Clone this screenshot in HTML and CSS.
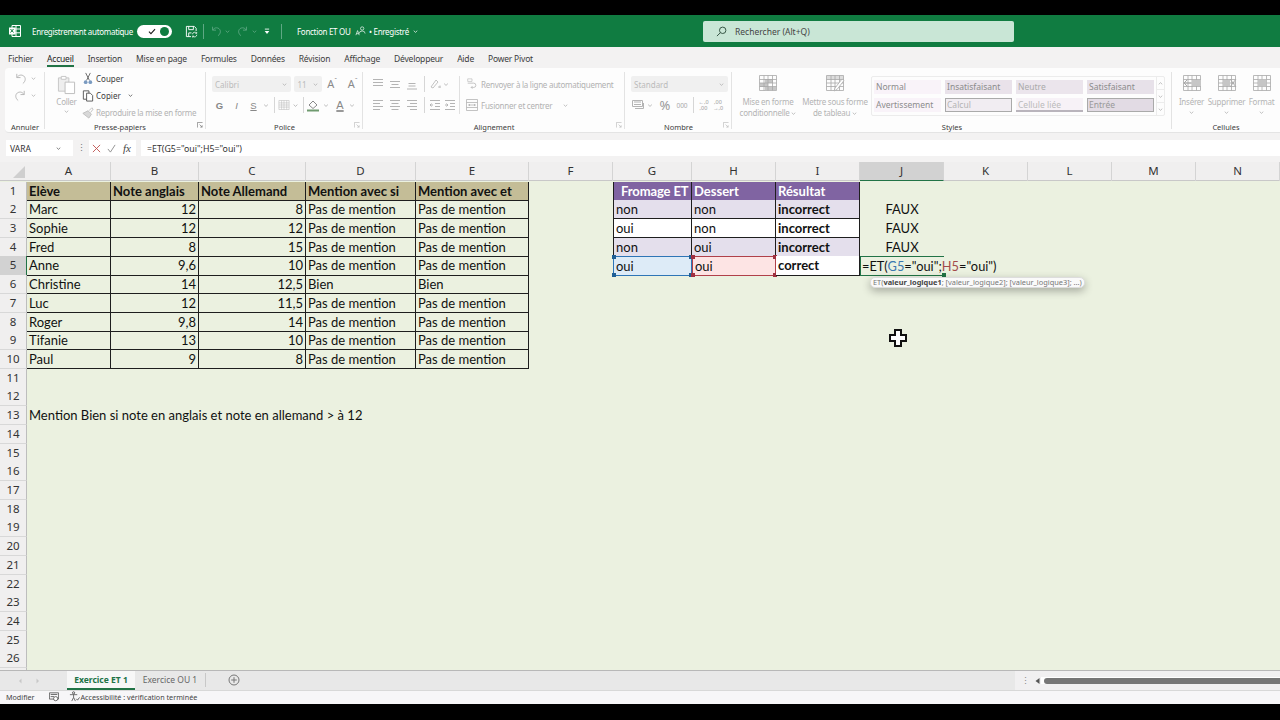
FILE: index.html
```html
<!DOCTYPE html>
<html lang="fr">
<head>
<meta charset="utf-8">
<title>Fonction ET OU - Excel</title>
<link rel="stylesheet" href="styles.css">
</head>
<body>
<svg class="sprite" aria-hidden="true">
  <symbol id="chev" viewBox="0 0 7 4"><path d="M1 .8 3.5 3.2 6 .8" fill="none" stroke="currentColor"/></symbol>
  <symbol id="undo" viewBox="0 0 14 14"><path d="M3 2v4h4M3.2 6C5 3 8 2.600 10.500 4.300 13 6.500 12.500 10 9.500 12.500" fill="none" stroke="currentColor" stroke-width="1"/></symbol>
  <symbol id="redo" viewBox="0 0 14 14"><path d="M11 2v4H7M10.800 6C9 3 6 2.600 3.500 4.300 1 6.500 1.500 10 4.500 12.500" fill="none" stroke="currentColor" stroke-width="1"/></symbol>
  <symbol id="al-top" viewBox="0 0 12 12"><path d="M1 1.500h10M1 4.500h10M1 7.500h10" stroke="currentColor"/></symbol>
  <symbol id="al-mid" viewBox="0 0 12 12"><path d="M1 3.500h10M2.500 6.500h7M1 9.500h10" stroke="currentColor"/></symbol>
  <symbol id="al-bot" viewBox="0 0 12 12"><path d="M2.500 5.500h7M2.500 8h7M1 11h10" stroke="currentColor"/></symbol>
  <symbol id="tx-l" viewBox="0 0 12 12"><path d="M1 1.500h10M1 4.500h7M1 7.500h10M1 10.500h7" stroke="currentColor"/></symbol>
  <symbol id="tx-c" viewBox="0 0 12 12"><path d="M1 1.500h10M2.500 4.500h7M1 7.500h10M2.500 10.500h7" stroke="currentColor"/></symbol>
  <symbol id="tx-r" viewBox="0 0 12 12"><path d="M1 1.500h10M4 4.500h7M1 7.500h10M4 10.500h7" stroke="currentColor"/></symbol>
  <symbol id="ind-l" viewBox="0 0 12 12"><path d="M1 1.500h10M6 4.500h5M6 7.500h5M1 10.500h10M4 6H1M2.500 4.500 1 6l1.500 1.500" fill="none" stroke="currentColor"/></symbol>
  <symbol id="ind-r" viewBox="0 0 12 12"><path d="M1 1.500h10M6 4.500h5M6 7.500h5M1 10.500h10M1 6h3M2.500 4.500 4 6 2.500 7.500" fill="none" stroke="currentColor"/></symbol>
  <symbol id="tbl" viewBox="0 0 20 18"><path d="M1.500 1.500h17v15h-17zM1.500 5.500h17M1.500 9h17M1.500 12.500h17M6 1.500v15M10 1.500v15M14.500 1.500v15" fill="none" stroke="currentColor" stroke-width=".8"/></symbol>
</svg>

<div class="app">
  <header class="titlebar">
    <svg class="ti-xl" viewBox="0 0 14 14"><path d="M4 1.500h8.500v11H4zM8 1.500v11M4 5h8.500M4 8.800h8.500" fill="none" stroke="#fff" stroke-width="1"/><path d="M1 3.500h6.500v7H1z" fill="#fff"/><path d="M2.500 5l3 3.500M5.500 5l-3 3.500" stroke="#107c41"/></svg>
    <span class="ti-auto">Enregistrement automatique</span>
    <span class="toggle"><svg viewBox="0 0 9 8"><path d="M1 4.200 3.300 6.500 8 1.300" fill="none" stroke="#1a1a1a" stroke-width="1.200"/></svg><i></i></span>
    <svg class="ti-save" viewBox="0 0 14 14"><path d="M1.500 1.500h8.500l2 2v3M1.500 1.500v11h5M4 1.500v3.500h5V1.500M4 12.500V8.500h3" fill="none" stroke="#fff"/><path d="M8 10a2.500 2.500 0 0 1 4.500-1.200M12.700 10.500A2.500 2.500 0 0 1 8.300 12M12.600 7.500v1.500h-1.500M8.200 13.500V12h1.500" fill="none" stroke="#fff" stroke-width=".8"/></svg>
    <span class="ti-sep"></span>
    <svg class="ti-undo"><use href="#undo"/></svg><svg class="ti-ch"><use href="#chev"/></svg>
    <svg class="ti-undo"><use href="#redo"/></svg><svg class="ti-ch"><use href="#chev"/></svg>
    <svg class="ti-qat" viewBox="0 0 7 8"><path d="M1 1.200h5" stroke="#fff"/><path d="M.8 3.500h5.400L3.500 7z" fill="#fff"/></svg>
    <span class="ti-sep ti-sep2"></span>
    <span class="ti-doc">Fonction ET OU</span>
    <svg class="ti-person" viewBox="0 0 13 12"><circle cx="8.500" cy="3" r="2" fill="none" stroke="#fff" stroke-width=".8"/><path d="M5 9a3.500 3 0 0 1 7 0" fill="none" stroke="#fff" stroke-width=".8"/><path d="M1 11 3 5.500 5 11M1.800 9.200h2.400" fill="none" stroke="#fff" stroke-width=".8"/></svg>
    <span class="ti-state">• Enregistré</span>
    <svg class="ti-ch ti-ch2"><use href="#chev"/></svg>
    <div class="search">
      <svg viewBox="0 0 12 12"><circle cx="7.300" cy="4.700" r="3.500" fill="none" stroke="#2c4a3a"/><path d="M4.800 7.300 1 11" stroke="#2c4a3a"/></svg>
      <span>Rechercher (Alt+Q)</span>
    </div>
  </header>

  <nav class="tabs">
    <span>Fichier</span><span class="on">Accueil</span><span>Insertion</span><span>Mise en page</span><span>Formules</span><span>Données</span><span>Révision</span><span>Affichage</span><span>Développeur</span><span>Aide</span><span>Power Pivot</span>
  </nav>

  <div class="chrome">
    <section class="ribbon">
      <div class="group g-undo">
        <div class="g-body stack">
          <div class="line"><svg class="i13 dis"><use href="#undo"/></svg><svg class="chv"><use href="#chev"/></svg></div>
          <div class="line"><svg class="i13 dis"><use href="#redo"/></svg><svg class="chv"><use href="#chev"/></svg></div>
        </div>
        <div class="g-label">Annuler</div>
      </div>

      <div class="group g-clip">
        <div class="g-body row-body">
          <div class="paste">
            <svg class="paste-ic" viewBox="0 0 20 21"><path d="M1.500 3h11v14h-11z" fill="#eee" stroke="#c6c6c6"/><path d="M4.500 1.500h5v3h-5z" fill="#fff" stroke="#c6c6c6"/><path d="M8.500 7.500h10v12h-10z" fill="#fff" stroke="#bdbdbd"/></svg>
            <span class="dtxt">Coller</span>
            <svg class="chv"><use href="#chev"/></svg>
          </div>
          <div class="clip-tools">
            <div class="tool"><svg viewBox="0 0 12 14"><path d="M3.500 1 7.500 9M8.500 1 4.500 9" stroke="#666" fill="none"/><circle cx="3.500" cy="11" r="2" fill="#7a9ac0"/><circle cx="8.500" cy="11" r="2" fill="#7a9ac0"/></svg><span class="etxt">Couper</span></div>
            <div class="tool"><svg viewBox="0 0 12 14"><path d="M1 2h6v9H1z" fill="none" stroke="#555"/><path d="M4.500 4.500h4l2.500 2.500v6H4.500z" fill="#fff" stroke="#555"/></svg><span class="etxt">Copier</span><svg class="chv chv-d"><use href="#chev"/></svg></div>
            <div class="tool"><svg viewBox="0 0 14 14"><path d="M1 8 7 5l4 4-3 4.500z" fill="#d8d8d8" stroke="#bbb"/><path d="M8 5l3.500-3.500 1.500 1.500L10 7" fill="none" stroke="#bbb"/></svg><span class="dtxt">Reproduire la mise en forme</span></div>
          </div>
        </div>
        <div class="g-label lbl-clip">Presse-papiers</div>
        <svg class="launch" viewBox="0 0 7 7"><path d="M.5 6.500v-6h6M3 3l3 3M3.800 6H6V3.800" fill="none" stroke="#777" stroke-width=".8"/></svg>
      </div>

      <div class="group g-font">
        <div class="g-body pad-rows">
          <div class="rline">
            <div class="combo c-font"><span>Calibri</span><svg class="chv"><use href="#chev"/></svg></div>
            <div class="combo c-size"><span>11</span><svg class="chv"><use href="#chev"/></svg></div>
            <span class="aa aa-up">A<sup>ˆ</sup></span><span class="aa">A<sup>ˇ</sup></span>
          </div>
          <div class="rline r2">
            <b class="fmt w17">G</b><i class="fmt w17">I</i><u class="fmt w17">S</u>
            <svg class="chv w8"><use href="#chev"/></svg><span class="vsep w8"></span>
            <svg class="i12 dis bord"><use href="#tbl"/></svg>
            <svg class="chv w11"><use href="#chev"/></svg><span class="vsep w4"></span>
            <span class="bucket w16"><svg viewBox="0 0 12 13"><path d="M2 6 6 2l4 4-4 3.500z" fill="none" stroke="#888"/><path d="M0 11.500h12" stroke="#6f9a6f" stroke-width="2"/></svg></span>
            <svg class="chv w10"><use href="#chev"/></svg>
            <span class="fmt fa w18">A</span>
            <svg class="chv w6"><use href="#chev"/></svg>
          </div>
        </div>
        <div class="g-label">Police</div>
        <svg class="launch" viewBox="0 0 7 7"><path d="M.5 6.500v-6h6M3 3l3 3M3.800 6H6V3.800" fill="none" stroke="#bbb" stroke-width=".8"/></svg>
      </div>

      <div class="group g-align">
        <div class="g-body row-body">
          <div class="al-left">
            <div class="rline">
              <span class="w17 c-i"><svg class="i12 dis"><use href="#al-top"/></svg></span>
              <span class="w17 c-i"><svg class="i12 dis"><use href="#al-mid"/></svg></span>
              <span class="w17 c-i"><svg class="i12 dis"><use href="#al-bot"/></svg></span>
              <span class="vsep w8"></span>
              <span class="w13 c-i"><svg class="i12 dis" viewBox="0 0 12 12"><path d="M2 9 7 2l2 2-5 6zM9 9h2.500M11 7.500v2.500" fill="none" stroke="currentColor" stroke-width=".8"/></svg></span>
              <svg class="chv w10"><use href="#chev"/></svg>
            </div>
            <div class="rline r2">
              <span class="w17 c-i"><svg class="i12 dis"><use href="#tx-l"/></svg></span>
              <span class="w17 c-i"><svg class="i12 dis"><use href="#tx-c"/></svg></span>
              <span class="w17 c-i"><svg class="i12 dis"><use href="#tx-r"/></svg></span>
              <span class="vsep w8"></span>
              <span class="w13 c-i"><svg class="i12 dis"><use href="#ind-l"/></svg></span>
              <span class="w17 c-i"><svg class="i12 dis"><use href="#ind-r"/></svg></span>
            </div>
          </div>
          <div class="al-right">
            <div class="rline al-tool"><svg class="i12 dis" viewBox="0 0 12 14"><path d="M1 6h7a2.500 2.500 0 0 1 0 5H5M6.500 9.500 5 11l1.500 1.500" fill="none" stroke="currentColor" stroke-width=".9"/><path d="M1 1h5v3H1z" fill="none" stroke="currentColor" stroke-width=".7"/></svg><span class="dtxt">Renvoyer à la ligne automatiquement</span></div>
            <div class="rline al-tool r2"><svg class="i12 dis" viewBox="0 0 12 12"><path d="M.5.500h11v11H.5zM.5 3.500h11M.5 8.500h11M3.500 6h5M2.500 6l1-1v2zM9.500 6l-1-1v2z" fill="none" stroke="currentColor" stroke-width=".8"/></svg><span class="dtxt">Fusionner et centrer</span><svg class="chv chv-m"><use href="#chev"/></svg></div>
          </div>
        </div>
        <div class="g-label">Alignement</div>
        <svg class="launch" viewBox="0 0 7 7"><path d="M.5 6.500v-6h6M3 3l3 3M3.800 6H6V3.800" fill="none" stroke="#bbb" stroke-width=".8"/></svg>
      </div>

      <div class="group g-num">
        <div class="g-body pad-rows">
          <div class="rline"><div class="combo c-std"><span>Standard</span><svg class="chv"><use href="#chev"/></svg></div></div>
          <div class="rline r2">
            <span class="w14 c-i"><svg class="i12 dis" viewBox="0 0 12 12"><path d="M.5 1.500h10v6H.5zM3 9.500h8.500V4" fill="none" stroke="currentColor"/><path d="M2 3h7M2 5.500h7" stroke="currentColor"/></svg></span>
            <svg class="chv w10"><use href="#chev"/></svg>
            <span class="pct w20">%</span><span class="mil w14">000</span><span class="vsep w8"></span>
            <span class="dec w13">←,0<br>,00</span><span class="dec w16">,00<br>→,0</span>
          </div>
        </div>
        <div class="g-label">Nombre</div>
        <svg class="launch" viewBox="0 0 7 7"><path d="M.5 6.500v-6h6M3 3l3 3M3.800 6H6V3.800" fill="none" stroke="#bbb" stroke-width=".8"/></svg>
      </div>

      <div class="group g-styles">
        <div class="g-body row-body">
          <div class="big b1">
            <svg class="i-big" viewBox="0 0 20 18"><path d="M7 5h8v4H7zM2 9h8v4H2zM7 13h11v3H7z" fill="#c6c6c6"/><use href="#tbl"/></svg>
            <span>Mise en forme</span><span>conditionnelle <svg class="chv in"><use href="#chev"/></svg></span>
          </div>
          <div class="big b2">
            <svg class="i-big" viewBox="0 0 20 18"><path d="M1.500 1.500h17v4h-17z" fill="#ddd"/><use href="#tbl"/><path d="M9 17l1-3 7-9 2 1.500-7 9z" fill="#fff" stroke="#aaa" stroke-width=".8"/></svg>
            <span>Mettre sous forme</span><span>de tableau <svg class="chv in"><use href="#chev"/></svg></span>
          </div>
          <div class="gallery">
            <div class="gal-grid">
              <span class="st">Normal</span><span class="st st-bad">Insatisfaisant</span><span class="st st-neu">Neutre</span><span class="st st-good">Satisfaisant</span>
              <span class="st">Avertissement</span><span class="st st-calc">Calcul</span><span class="st st-link">Cellule liée</span><span class="st st-in">Entrée</span>
            </div>
            <div class="gal-scroll">
              <span><svg class="chv up"><use href="#chev"/></svg></span>
              <span><svg class="chv"><use href="#chev"/></svg></span>
              <span><svg class="chv"><use href="#chev"/></svg></span>
            </div>
          </div>
        </div>
        <div class="g-label">Styles</div>
      </div>

      <div class="group g-cells">
        <div class="g-body row-body">
          <div class="big cellbtn">
            <svg class="i-big" viewBox="0 0 20 18"><use href="#tbl"/><path d="M10 6h9v6h-9z" fill="#c6c6c6"/><path d="M9 9H2M5 6 2 9l3 3" fill="none" stroke="#aaa"/></svg>
            <span>Insérer</span><svg class="chv"><use href="#chev"/></svg>
          </div>
          <div class="big cellbtn">
            <svg class="i-big" viewBox="0 0 20 18"><use href="#tbl"/><path d="M6 6h7v6H6z" fill="#c6c6c6"/><path d="M13 5l6 8M19 5l-6 8" stroke="#aaa"/></svg>
            <span>Supprimer</span><svg class="chv"><use href="#chev"/></svg>
          </div>
          <div class="big cellbtn">
            <svg class="i-big" viewBox="0 0 20 18"><use href="#tbl"/><path d="M6 5.500h8.500v7H6z" fill="#c6c6c6"/></svg>
            <span>Format</span><svg class="chv"><use href="#chev"/></svg>
          </div>
        </div>
        <div class="g-label">Cellules</div>
      </div>
    </section>

    <div class="fbar">
      <div class="namebox"><span>VARA</span><svg class="chv"><use href="#chev"/></svg></div>
      <span class="dots">⋮</span>
      <div class="fx">
        <svg viewBox="0 0 10 10"><path d="M1 1l8 8M9 1 1 9" stroke="#c0504d"/></svg>
        <svg viewBox="0 0 10 10"><path d="M1 5.500 3.800 9 9 1" fill="none" stroke="#8a8a8a"/></svg>
        <em>fx</em>
      </div>
      <div class="finput">=ET(G5="oui";H5="oui")</div>
    </div>
  </div>

  <div class="cols">
    <div class="corner"><i></i></div>
    <span>A</span><span>B</span><span>C</span><span>D</span><span>E</span><span>F</span><span>G</span><span>H</span><span>I</span><span class="sel">J</span><span>K</span><span>L</span><span>M</span><span>N</span>
  </div>

  <main class="sheet">
    <div class="row"><b class="rh">1</b><div class="c b first h">Elève</div><div class="c b h">Note anglais</div><div class="c b h">Note Allemand</div><div class="c b h">Mention avec si</div><div class="c b h">Mention avec et</div><div></div><div class="c b first p indent">Fromage ET</div><div class="c b p">Dessert</div><div class="c b p">Résultat</div></div>
    <div class="row"><b class="rh">2</b><div class="c b first">Marc</div><div class="c b n">12</div><div class="c b n">8</div><div class="c b">Pas de mention</div><div class="c b">Pas de mention</div><div></div><div class="c b first l">non</div><div class="c b l">non</div><div class="c b l st-b">incorrect</div><div class="c m">FAUX</div></div>
    <div class="row"><b class="rh">3</b><div class="c b first">Sophie</div><div class="c b n">12</div><div class="c b n">12</div><div class="c b">Pas de mention</div><div class="c b">Pas de mention</div><div></div><div class="c b first wh">oui</div><div class="c b wh">non</div><div class="c b wh st-b">incorrect</div><div class="c m">FAUX</div></div>
    <div class="row"><b class="rh">4</b><div class="c b first">Fred</div><div class="c b n">8</div><div class="c b n">15</div><div class="c b">Pas de mention</div><div class="c b">Pas de mention</div><div></div><div class="c b first l">non</div><div class="c b l">oui</div><div class="c b l st-b">incorrect</div><div class="c m">FAUX</div></div>
    <div class="row"><b class="rh rsel">5</b><div class="c b first">Anne</div><div class="c b n">9,6</div><div class="c b n">10</div><div class="c b">Pas de mention</div><div class="c b">Pas de mention</div><div></div>
      <div class="c ref rb">oui<i class="hd tl"></i><i class="hd tr"></i><i class="hd bl"></i><i class="hd br"></i></div>
      <div class="c ref rr">oui<i class="hd tl"></i><i class="hd tr"></i><i class="hd bl"></i><i class="hd br"></i></div>
      <div class="c b wh st-b">correct</div>
      <div class="c edit">=ET(<span class="fb">G5</span>="oui";<span class="fr">H5</span>="oui")<i class="hd br"></i></div></div>
    <div class="row"><b class="rh">6</b><div class="c b first">Christine</div><div class="c b n">14</div><div class="c b n">12,5</div><div class="c b">Bien</div><div class="c b">Bien</div></div>
    <div class="row"><b class="rh">7</b><div class="c b first">Luc</div><div class="c b n">12</div><div class="c b n">11,5</div><div class="c b">Pas de mention</div><div class="c b">Pas de mention</div></div>
    <div class="row"><b class="rh">8</b><div class="c b first">Roger</div><div class="c b n">9,8</div><div class="c b n">14</div><div class="c b">Pas de mention</div><div class="c b">Pas de mention</div></div>
    <div class="row"><b class="rh">9</b><div class="c b first">Tifanie</div><div class="c b n">13</div><div class="c b n">10</div><div class="c b">Pas de mention</div><div class="c b">Pas de mention</div></div>
    <div class="row"><b class="rh">10</b><div class="c b first">Paul</div><div class="c b n">9</div><div class="c b n">8</div><div class="c b">Pas de mention</div><div class="c b">Pas de mention</div></div>
    <div class="row"><b class="rh">11</b></div>
    <div class="row"><b class="rh">12</b></div>
    <div class="row"><b class="rh">13</b><div class="c">Mention Bien si note en anglais et note en allemand &gt; à 12</div></div>
    <div class="row"><b class="rh">14</b></div>
    <div class="row"><b class="rh">15</b></div>
    <div class="row"><b class="rh">16</b></div>
    <div class="row"><b class="rh">17</b></div>
    <div class="row"><b class="rh">18</b></div>
    <div class="row"><b class="rh">19</b></div>
    <div class="row"><b class="rh">20</b></div>
    <div class="row"><b class="rh">21</b></div>
    <div class="row"><b class="rh">22</b></div>
    <div class="row"><b class="rh">23</b></div>
    <div class="row"><b class="rh">24</b></div>
    <div class="row"><b class="rh">25</b></div>
    <div class="row"><b class="rh">26</b></div>
    <div class="row"><b class="rh"></b></div>

    <div class="tip">ET(<b>valeur_logique1</b>; [valeur_logique2]; [valeur_logique3]; ...)</div>
    <svg class="cursor" viewBox="0 0 22 22"><path d="M8 3h6v5h5v6h-5v5H8v-5H3V8h5z" fill="#fff" stroke="#111" stroke-width="2"/></svg>
  </main>

  <div class="sheetbar">
    <div class="nav"><svg viewBox="0 0 4 6"><path d="M3.500.5 1 3l2.500 2.500z" fill="#c8c8c8"/></svg><svg viewBox="0 0 4 6"><path d="M.5.5 3 3 .5 5.500z" fill="#c8c8c8"/></svg></div>
    <div class="sh on">Exercice ET 1</div>
    <div class="sh">Exercice OU 1</div>
    <svg class="addsh" viewBox="0 0 12 12"><circle cx="6" cy="6" r="5" fill="none" stroke="#777"/><path d="M6 3.200v5.600M3.200 6h5.600" stroke="#777"/></svg>
    <div class="hscroll">
      <span class="grip">⋮</span>
      <svg class="harrow" viewBox="0 0 5 6"><path d="M4.500 0 .5 3l4 3z" fill="#555"/></svg>
      <div class="track"><i></i></div>
    </div>
  </div>

  <footer class="status">
    <span>Modifier</span>
    <svg class="st-macro" viewBox="0 0 12 12"><path d="M.5 1h11v7.500H.5z" fill="none" stroke="#555"/><path d="M2 3h8M2 5.500h4" stroke="#555"/><circle cx="8" cy="8" r="2.500" fill="#fff" stroke="#555"/></svg>
    <svg class="st-acc" viewBox="0 0 12 12"><circle cx="5" cy="2" r="1.200" fill="none" stroke="#555"/><path d="M1 4h8M5 4v3L3 11M5 7l2 4" fill="none" stroke="#555" stroke-width=".9"/><path d="M8 8.500 9.300 10 11.500 7" fill="none" stroke="#555"/></svg>
    <span>Accessibilité : vérification terminée</span>
  </footer>
</div>
</body>
</html>
```

FILE: styles.css
```css
* { box-sizing: border-box; }
html, body { margin: 0; height: 100%; }
body { background: #000; padding: 15px 0 16px; overflow: hidden; font-family: "Noto Sans", "Open Sans", sans-serif; color: #333; }
.sprite { display: none; }
.app { height: 689px; display: flex; flex-direction: column; overflow: hidden; background: #f3f2f2; }
svg { display: block; flex: none; }

/* Title bar */
.titlebar { height: 32px; flex: none; background: #107c41; color: #fff; display: flex; align-items: center; font-size: 8px; letter-spacing: -.3px; padding-left: 8px; }
.ti-xl { width: 14px; height: 14px; }
.ti-auto { margin-left: 10px; width: 105px; white-space: nowrap; }
.toggle { width: 35px; height: 13px; border-radius: 7px; background: #fff; display: flex; align-items: center; justify-content: flex-end; gap: 4px; padding-right: 3px; }
.toggle svg { width: 8px; height: 7px; }
.toggle i { width: 9px; height: 9px; border-radius: 50%; background: #107c41; }
.ti-save { width: 13px; height: 13px; margin-left: 13px; }
.ti-sep { width: 1px; height: 15px; background: #5fa884; margin: 0 6px 0 5px; }
.ti-undo { width: 12px; height: 12px; color: #5fa884; }
.ti-ch { width: 5px; height: 3px; margin: 0 7px 0 3px; color: #6fb08f; }
.ti-qat { width: 6px; height: 7px; margin-left: 0; }
.ti-sep2 { margin: 0 15px 0 11px; }
.ti-doc { width: 57px; white-space: nowrap; }
.ti-person { width: 11px; height: 10px; margin-left: 1px; }
.ti-state { padding-left: 3px; width: 47px; white-space: nowrap; }
.ti-ch2 { margin: 0; color: #fff; }
.search { position: absolute; left: 703px; top: 21px; width: 311px; height: 21px; background: #c9e6d6; border-radius: 2px; display: flex; align-items: center; padding-left: 13px; color: #444; gap: 8px; font-size: 8.5px; letter-spacing: 0; }
.search svg { width: 11px; height: 11px; }

/* Tabs */
.tabs { height: 21px; flex: none; display: flex; gap: 14px; padding-left: 8px; font-size: 8.5px; letter-spacing: -.2px; align-items: center; color: #3c3c3c; }
.tabs span { white-space: nowrap; line-height: 19px; height: 18px; }
.tabs .on { border-bottom: 2px solid #217346; color: #222; }

/* Ribbon */
.chrome { height: 94px; flex: none; padding-left: 5px; }
.ribbon { height: 65px; background: #fdfdfd; border-radius: 4px 0 0 4px; display: flex; border-bottom: 1px solid #e4e4e4; }
.group { position: relative; display: flex; flex-direction: column; flex: none; }
.group::after { content: ""; position: absolute; right: 0; top: 4px; bottom: 3px; width: 1px; background: #e3e3e3; }
.g-body { height: 52px; flex: none; }
.g-label { text-align: center; font-size: 7.5px; line-height: 14px; color: #3c3c3c; white-space: nowrap; }
.launch { position: absolute; right: 3px; bottom: 4px; width: 6px; height: 6px; }
.g-undo { width: 40px; }
.g-clip { width: 161px; }
.g-font { width: 157px; }
.g-align { width: 262px; }
.g-num { width: 107px; }
.g-styles { width: 440px; }
.g-cells { width: 108px; }
.g-cells::after { display: none; }
.lbl-clip { padding-right: 11px; }

.dis { color: #b4b4b4; }
.dtxt { color: #b2b2b2; font-size: 8px; letter-spacing: -.25px; white-space: nowrap; }
.etxt { color: #3c3c3c; font-size: 8px; white-space: nowrap; }
.chv { width: 5px; height: 3px; color: #aaa; }
.i13 { width: 13px; height: 13px; }
.i12 { width: 12px; height: 12px; }
.c-i { display: flex; justify-content: center; }

.stack { padding-top: 2px; }
.line { height: 17px; display: flex; align-items: center; justify-content: center; gap: 4px; }

.row-body { display: flex; }
.paste { width: 25px; margin-left: 9px; padding-top: 7px; display: flex; flex-direction: column; align-items: center; }
.paste-ic { width: 19px; height: 20px; }
.paste .dtxt { line-height: 11px; margin-top: 1px; }
.paste .chv { margin-top: 3px; }
.clip-tools { padding-top: 2px; margin-left: 3px; }
.tool { height: 17px; display: flex; align-items: center; gap: 2px; }
.tool > svg:first-child { width: 12px; height: 13px; }
.chv-d { margin-left: 5px; color: #444; }

.pad-rows { padding: 8px 0 0 6px; }
.rline { display: flex; align-items: center; height: 16px; }
.r2 { margin-top: 5px; }
.combo { height: 16px; background: #f0f0f0; border-radius: 2px; display: flex; align-items: center; justify-content: space-between; padding: 0 4px 0 3px; font-size: 8px; color: #bbb; }
.c-font { width: 81px; }
.c-size { width: 28px; margin-left: 3px; }
.c-std { width: 97px; }
.aa { font-size: 11px; color: #8a8a8a; width: 21px; text-align: center; line-height: 16px; }
.aa sup { font-size: 7px; line-height: 0; }
.fmt { font-size: 9.5px; color: #888; text-align: center; font-family: "Liberation Sans", sans-serif; }
.fa { text-decoration: underline; text-decoration-thickness: 2px; text-underline-offset: 1px; text-decoration-color: #999; font-size: 11px; }
.w4 { width: 4px; } .w6 { width: 6px; } .w8 { width: 8px; } .w10 { width: 10px; } .w11 { width: 11px; } .w13 { width: 13px; }
.w14 { width: 14px; } .w16 { width: 16px; } .w17 { width: 17px; } .w18 { width: 18px; } .w20 { width: 20px; }
.g-font .r2 { margin-left: -1px; }
.vsep { height: 16px; position: relative; display: block; }
.vsep::before { content: ""; position: absolute; left: 50%; top: 0; bottom: 0; width: 1px; background: #d6d6d6; }
.bucket svg { width: 12px; height: 13px; margin: 0 auto; }

.g-align .row-body { padding-left: 6px; padding-top: 8px; }
.al-left { width: 91px; height: 38px; border-right: 1px solid #e0e0e0; }
.al-right { padding-left: 6px; }
.al-tool { gap: 3px; }
.chv-m { margin-left: 8px; }

.pct { font-size: 13px; color: #999; text-align: center; line-height: 16px; }
.mil { font-size: 6.5px; color: #aaa; text-align: center; }
.dec { font-size: 5.5px; line-height: 6px; color: #999; text-align: center; white-space: nowrap; }

.g-styles .row-body { padding-left: 2px; }
.big { display: flex; flex-direction: column; align-items: center; font-size: 8px; letter-spacing: -.25px; line-height: 11px; color: #b4b4b4; padding-top: 6px; white-space: nowrap; }
.big .i-big { width: 20px; height: 18px; margin-bottom: 4px; color: #a8a8a8; }
.b1 { width: 68px; }
.b2 { width: 66px; }
.chv.in { display: inline-block; vertical-align: middle; }
.gallery { width: 294px; height: 40px; margin: 8px 0 0 3px; border: 1px solid #ececec; border-radius: 2px; display: flex; padding: 3px 0 0 2px; }
.gal-grid { display: grid; grid-template-columns: repeat(4, 67px); grid-auto-rows: 14px; column-gap: 4px; row-gap: 4px; width: 281px; }
.st { font-size: 8.5px; line-height: 14px; padding-left: 2px; color: #8c8c8c; background: #f9f3f9; white-space: nowrap; overflow: hidden; }
.st-bad { background: #e9e2ea; }
.st-neu { background: #ebe5ec; color: #aaa; }
.st-good { background: #e7e1e9; }
.st-calc { background: #f1edf2; border: 1px solid #aaa; color: #b4b4b4; line-height: 12px; padding-left: 1px; }
.st-link { background: #f7f2f7; border-bottom: 2px solid #b9b4bc; color: #bbb; line-height: 13px; }
.st-in { background: #e2dbe4; border: 1px solid #aaa; color: #999; line-height: 12px; padding-left: 1px; }
.gal-scroll { display: flex; flex-direction: column; width: 9px; margin: -3px 0 0 2px; border-left: 1px solid #ececec; }
.gal-scroll span { flex: 1; display: flex; align-items: center; justify-content: center; border-bottom: 1px solid #ececec; }
.gal-scroll span:last-child { border-bottom: 0; }
.up { transform: scaleY(-1); }
.g-cells .row-body { padding-left: 2px; }
.cellbtn { width: 35px; }
.cellbtn .chv { margin-top: 4px; }

/* Formula bar */
.fbar { display: flex; align-items: stretch; height: 16px; margin-top: 7px; }
.namebox { width: 67px; margin-left: 1px; background: #fff; display: flex; align-items: center; justify-content: space-between; padding: 0 12px 0 4px; font-size: 8.5px; color: #333; }
.namebox .chv { color: #555; }
.dots { width: 16px; text-align: center; font-size: 9px; line-height: 16px; color: #777; }
.fx { width: 47px; background: #fff; display: flex; align-items: center; padding-left: 3px; gap: 6px; }
.fx svg { width: 9px; height: 9px; }
.fx em { font: italic 11px "Liberation Serif", serif; color: #444; margin-left: 1px; }
.finput { flex: 1; background: #fff; margin-left: 5px; padding: 1px 0 0 6px; font-size: 8.8px; line-height: 16px; color: #333; }

/* Grid */
.cols, .row { display: grid; grid-template-columns: 27px 84px 88px 107px 110px 113px 84px 79px 84px 84px 84px 84px 84px 84px 84px; }
.cols { height: 19px; flex: none; background: #f0efef; font-size: 11.5px; color: #333; text-align: center; line-height: 17px; border-bottom: 1px solid #c8c8c8; }
.cols span { border-right: 1px solid #d4d4d4; }
.cols .sel { background: #d2d2d2; border-bottom: 1px solid #217346; height: 19px; }
.corner { position: relative; }
.corner i { position: absolute; right: 2px; bottom: 3px; border-style: solid; border-width: 0 0 12px 12px; border-color: transparent transparent #cfcfcf transparent; }
.sheet { flex: 1; position: relative; overflow: hidden; background: #ebf1e0; padding-top: .5px; }
.row { height: 18.72px; }
.rh { background: #f0efef; font-weight: 400; font-size: 11.5px; color: #333; text-align: center; line-height: 18px; border-right: 1px solid #bdbdbd; border-bottom: 1px solid #d8d8d8; }
.rsel { background: #d2d2d2; border-right: 1px solid #217346; }
.c { display: block; font: 13px/18px Lato, "Liberation Sans", sans-serif; color: #111; padding: 0 2px; white-space: nowrap; position: relative; }
.b { border-right: 1px solid #1e1e1e; border-bottom: 1px solid #1e1e1e; }
.first { border-left: 1px solid #1e1e1e; }
.row > .c.first:nth-child(2) { border-left: 0; }
.n { text-align: right; }
.h { background: #c4bd97; font-weight: 700; }
.p { background: #8064a2; color: #fff; font-weight: 700; }
.indent { padding-left: 7px; letter-spacing: -.1px; }
.l { background: #e4dfec; }
.wh { background: #fff; }
.st-b { font-weight: 700; }
.m { text-align: center; }
.ref { border: 1px solid; }
.rb { border-color: #2e75b6; background: #ddebf7; }
.rr { border-color: #b0404a; background: #fde4e4; }
.edit { border: 1px solid #217346; border-right: 0; padding-left: 1px; font-size: 12.8px; }
.fb { color: #3a78b0; }
.fr { color: #a34a4a; }
.hd { position: absolute; width: 4px; height: 4px; background: currentColor; }
.rb .hd { color: #1f5f95; }
.rr .hd { color: #a03040; }
.edit .hd { color: #217346; }
.tl { left: -2px; top: -2px; } .tr { right: -2px; top: -2px; }
.bl { left: -2px; bottom: -2px; } .br { right: -2px; bottom: -2px; }
.tip { position: absolute; left: 870px; top: 96px; width: 215px; height: 11px; background: #fafafa; border: 1px solid #ddd; border-radius: 5px; box-shadow: 0 3px 8px rgba(0, 0, 0, .3); font-size: 7.4px; line-height: 9px; padding-left: 2px; color: #777; white-space: nowrap; overflow: hidden; }
.tip b { color: #444; }
.cursor { position: absolute; left: 887px; top: 146px; width: 22px; height: 22px; }

/* Sheet bar */
.sheetbar { height: 20px; flex: none; background: #e8e8e8; border-top: 1px solid #b8b8b8; display: flex; align-items: stretch; font-size: 8.5px; color: #666; }
.nav { width: 67px; display: flex; align-items: center; padding-left: 18px; gap: 14px; }
.nav svg { width: 4px; height: 6px; }
.sh { width: 71px; text-align: center; line-height: 18px; white-space: nowrap; }
.sh.on { width: 68px; background: #f7f7f7; color: #217346; font-weight: 700; border-bottom: 2px solid #217346; }
.sh:not(.on) { border-right: 1px solid #c8c8c8; margin: 2px 0 3px; line-height: 14px; }
.addsh { width: 12px; height: 12px; margin: 3px 0 0 22px; }
.hscroll { margin-left: auto; width: 265px; background: #f1f0f1; display: flex; align-items: center; }
.grip { width: 20px; text-align: center; font-size: 9px; color: #888; }
.harrow { width: 5px; height: 6px; margin-right: 1px; }
.track { flex: 1; height: 7px; background: #fff; display: flex; align-items: center; padding-left: 3px; }
.track i { display: block; width: 100%; height: 6px; background: #767676; border-radius: 3px 0 0 3px; }

/* Status */
.status { height: 14px; flex: none; background: #f7f6f8; border-top: 1px solid #d8d8d8; display: flex; align-items: center; padding: 0 0 2px 6px; font-size: 7.2px; color: #444; white-space: nowrap; }
.st-macro { width: 10px; height: 10px; margin: 0 0 0 14px; }
.st-acc { width: 11px; height: 11px; margin: 0 1px 0 10px; }
```
